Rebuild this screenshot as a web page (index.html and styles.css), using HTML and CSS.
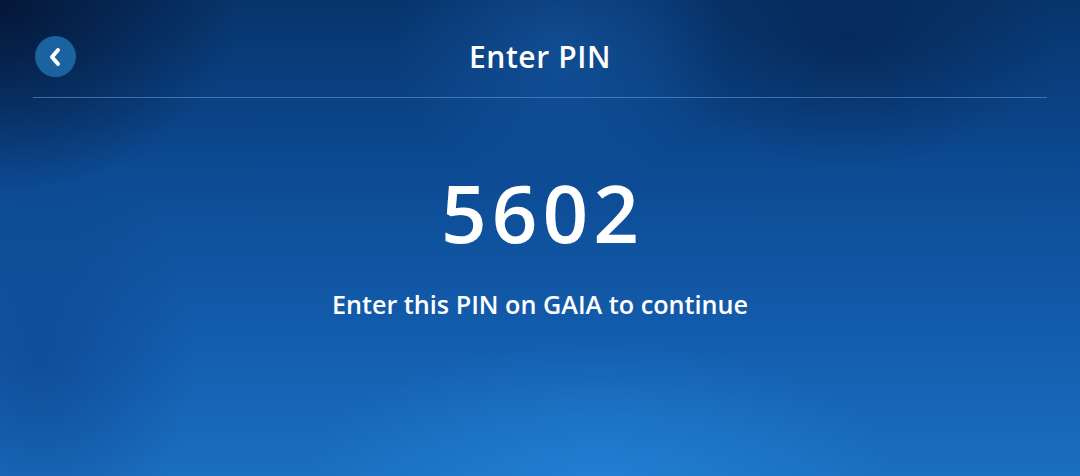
FILE: index.html
```html
<!DOCTYPE html>
<html lang="en">
<head>
<meta charset="utf-8">
<title>Enter PIN</title>
<link rel="stylesheet" href="styles.css">
</head>
<body>
<div class="screen">
  <header class="topbar">
    <button class="back" aria-label="Back">
      <svg width="14" height="22" viewBox="0 0 14 22"><path d="M10 4 L4 11 L10 18" fill="none" stroke="#fff" stroke-width="4" stroke-linecap="round" stroke-linejoin="round"/></svg>
    </button>
    <h1 class="title">Enter PIN</h1>
    <span class="spacer"></span>
  </header>
  <main class="content">
    <div class="pin">5602</div>
    <p class="hint">Enter this PIN on GAIA to continue</p>
  </main>
</div>
</body>
</html>
```
FILE: styles.css
```css
html, body {
  margin: 0;
  padding: 0;
  width: 1080px;
  height: 476px;
  overflow: hidden;
}
body {
  font-family: "Open Sans", "Noto Sans", sans-serif;
  color: #fff;
}
.screen {
  width: 1080px;
  height: 476px;
  box-sizing: border-box;
  padding: 0 33px;
  display: flex;
  flex-direction: column;
  background:
    radial-gradient(ellipse 420px 200px at 600px 480px, rgba(40,140,225,0.55), rgba(40,140,225,0) 70%),
    radial-gradient(ellipse 240px 200px at 560px 50px, rgba(25,95,175,0.5), rgba(25,95,175,0) 70%),
    radial-gradient(ellipse 300px 180px at 850px 40px, rgba(5,30,70,0.55), rgba(5,30,70,0) 70%),
    radial-gradient(ellipse 320px 260px at 0px 0px, rgba(4,20,50,0.9), rgba(4,20,50,0) 75%),
    radial-gradient(ellipse 220px 300px at 40px 360px, rgba(10,60,130,0.5), rgba(10,60,130,0) 70%),
    linear-gradient(180deg, #07346b 0%, #0c4a92 35%, #145fb0 75%, #1b6fc0 100%);
}
.topbar {
  height: 98px;
  display: flex;
  align-items: center;
  justify-content: space-between;
  border-bottom: 1px solid rgba(110,160,210,0.55);
  padding: 18px 0 2px;
  box-sizing: border-box;
}
.back {
  width: 41px;
  height: 41px;
  border-radius: 50%;
  border: 0;
  padding: 0 2px 0 0;
  margin-left: 2px;
  background: #1a62a0;
  display: flex;
  align-items: center;
  justify-content: center;
}
.title {
  margin: 0;
  font-size: 30px;
  font-weight: 600;
  letter-spacing: 0.6px;
  line-height: 40px;
}
.spacer {
  width: 43px;
}
.content {
  display: flex;
  flex-direction: column;
  align-items: center;
}
.pin {
  margin-top: 64px;
  font-size: 80px;
  font-weight: 600;
  line-height: 100px;
  letter-spacing: 5px;
  padding-left: 5px;
}
.hint {
  margin: 26px 0 0;
  font-size: 25.2px;
  font-weight: 600;
  line-height: 32px;
}
```
